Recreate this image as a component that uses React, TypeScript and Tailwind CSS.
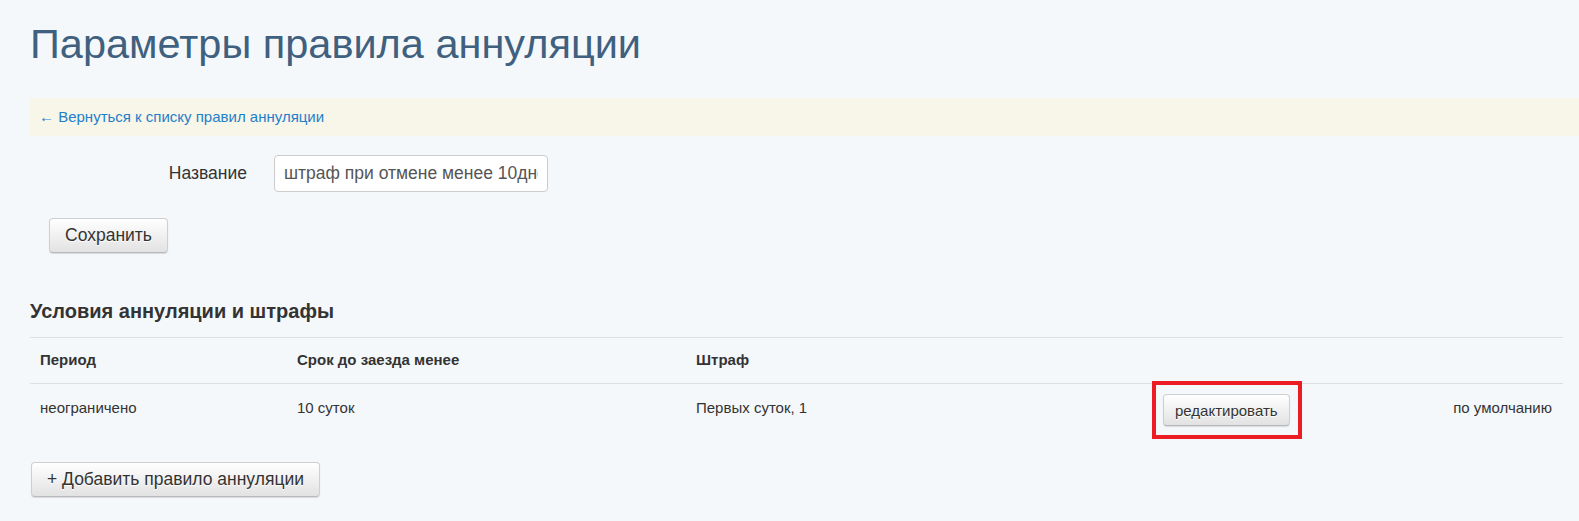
import { useState } from "react";

const rules = [
  {
    period: "неограничено",
    term: "10 суток",
    penalty: "Первых суток, 1",
    note: "по умолчанию",
  },
];

const btn =
  "rounded-[4px] border border-[#cfcfcf] border-b-[#b9b9b9] bg-gradient-to-b from-white to-[#e2e2e2] text-[#333] shadow-[0_1px_1px_rgba(0,0,0,0.12)] [text-shadow:0_1px_0_#fff]";

export default function App() {
  const [name, setName] = useState("штраф при отмене менее 10дней");

  return (
    <div className="min-h-screen bg-[#f5f8fb] font-['Liberation_Sans',Arial,sans-serif] text-[#333]">
      <div className="pl-[30px]">
        <h1 className="pt-[21px] text-[41.5px] leading-[46px] font-normal text-[#40607f]">
          Параметры правила аннуляции
        </h1>

        {/* back link bar */}
        <div className="mt-[31px] flex h-[38px] items-center bg-[#f8f5e9] pl-[9px]">
          <a href="#" className="text-[15px] text-[#1f80c9]">
            ← Вернуться к списку правил аннуляции
          </a>
        </div>

        <div className="pr-[16px]">
          <div className="mt-[19px] flex items-center">
            <label className="w-[217px] text-right text-[17.5px]">Название</label>
            <input
              value={name}
              onChange={(e) => setName(e.target.value)}
              className="ml-[27px] h-[37px] w-[274px] rounded-[4px] border border-[#cccccc] bg-white px-[9px] text-[17.5px] text-[#555] outline-none"
            />
          </div>

          <button type="button" className={`${btn} mt-[26px] ml-[19px] h-[35px] px-[15px] text-[17.5px]`}>
            Сохранить
          </button>

          <h2 className="mt-[46px] text-[20px] leading-[24px] font-bold">
            Условия аннуляции и штрафы
          </h2>

          <div className="mt-[14px] border-t border-[#dcdfe3]">
            <div className="grid h-[46px] grid-cols-[257px_399px_467px_1fr_auto] items-center border-b border-[#dcdfe3] text-[15px] font-bold">
              <div className="pl-[10px]">Период</div>
              <div className="pl-[10px]">Срок до заезда менее</div>
              <div className="pl-[10px]">Штраф</div>
              <div />
              <div />
            </div>
            {rules.map((r) => (
              <div
                key={r.period}
                className="grid grid-cols-[257px_399px_467px_1fr_auto] items-start pt-[10px] pb-[10px] text-[15px] leading-[21px]"
              >
                <div className="mt-[3px] pl-[10px]">{r.period}</div>
                <div className="mt-[3px] pl-[10px]">{r.term}</div>
                <div className="mt-[3px] pl-[10px]">{r.penalty}</div>
                <div className="pl-[10px]">
                  <span className="relative inline-block">
                    <button type="button" className={`${btn} h-[32px] px-[11px] text-[15px]`}>
                      редактировать
                    </button>
                    {/* highlight frame */}
                    <span className="pointer-events-none absolute -top-[13px] -bottom-[13px] -left-[11px] -right-[12px] border-4 border-[#ec1c24]" />
                  </span>
                </div>
                <div className="mt-[3px] pr-[11px] text-right">{r.note}</div>
              </div>
            ))}
          </div>

          <button type="button" className={`${btn} mt-[26px] ml-px h-[35px] px-[15px] text-[17.5px]`}>
            + Добавить правило аннуляции
          </button>
        </div>
      </div>
    </div>
  );
}
